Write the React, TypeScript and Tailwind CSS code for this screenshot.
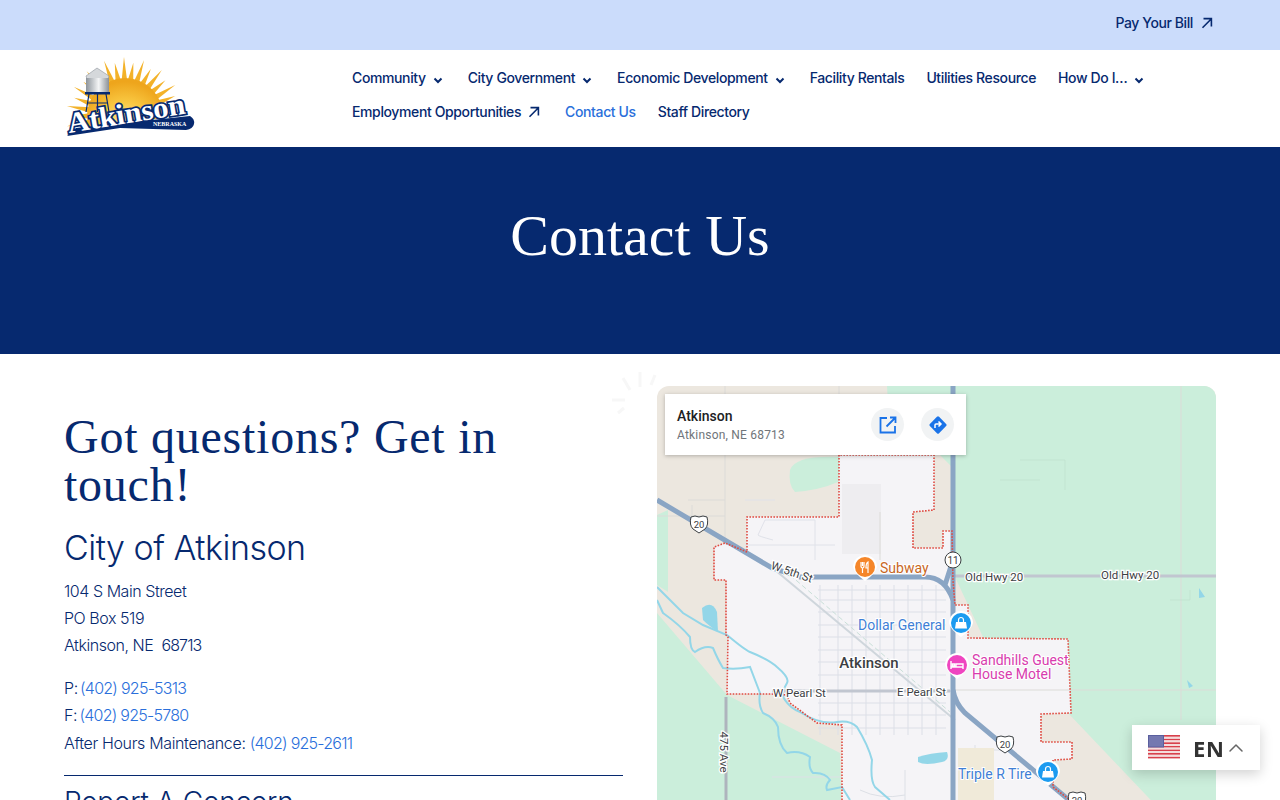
import React from 'react';
import { ChevronUp } from 'lucide-react';

const navItems = [
  { label: 'Community', icon: 'down' },
  { label: 'City Government', icon: 'down' },
  { label: 'Economic Development', icon: 'down' },
  { label: 'Facility Rentals' },
  { label: 'Utilities Resource' },
  { label: 'How Do I…', icon: 'down' },
  { label: 'Employment Opportunities', icon: 'out' },
  { label: 'Contact Us', active: true },
  { label: 'Staff Directory' },
];

const OutArrow = () => (
  <svg width="12" height="12" viewBox="0 0 12 12" fill="none" stroke="currentColor" strokeWidth="1.6" className="shrink-0">
    <path d="M1.5 10.8 L10.2 2 M2.5 1.6 H10.4 V9.5" />
  </svg>
);

const Chevron = () => (
  <svg width="14" height="14" viewBox="0 0 14 14" fill="none" stroke="currentColor" strokeWidth="2" className="shrink-0 mt-[3px] ml-[-1px] mr-[1px]">
    <path d="M3.5 5.5 L7 9 L10.5 5.5" />
  </svg>
);

const Logo = () => {
  const rays = Array.from({ length: 21 }, (_, i) => {
    const a = (-190 + i * 9.9) * (Math.PI / 180);
    const cx = 125;
    const cy = 116;
    const r1 = 36;
    const r2 = i % 2 === 0 ? 59 : 54;
    const b = 0.075;
    return `${cx + r1 * Math.cos(a - b)},${cy + r1 * Math.sin(a - b)} ${cx + r2 * Math.cos(a)},${cy + r2 * Math.sin(a)} ${cx + r1 * Math.cos(a + b)},${cy + r1 * Math.sin(a + b)}`;
  });
  return (
    <svg width="140" height="85" viewBox="60 55 140 85" className="shrink-0">
      <defs>
        <radialGradient id="sun" cx="0.5" cy="0.65" r="0.6">
          <stop offset="0" stopColor="#fdeeb0" />
          <stop offset="0.55" stopColor="#f9c842" />
          <stop offset="1" stopColor="#eea51c" />
        </radialGradient>
        <linearGradient id="tank" x1="0" x2="1" y1="0" y2="0">
          <stop offset="0" stopColor="#8d949b" />
          <stop offset="0.55" stopColor="#f4f5f6" />
          <stop offset="1" stopColor="#8a9097" />
        </linearGradient>
        <clipPath id="sunClip">
          <polygon points="60,55 200,55 200,112 60,134" />
        </clipPath>
      </defs>
      <g clipPath="url(#sunClip)">
        {rays.map((p, i) => (
          <polygon key={i} points={p} fill="#f3b229" />
        ))}
        <circle cx="125" cy="116" r="38" fill="url(#sun)" />
      </g>
      <path d="M67 136 L76 128 L190 116 Q195 119 194 124 Q193 129 186 130 L120 128 Z" fill="#06296f" />
      <path d="M86 76 L97 68 L109 76 L108 79 H87 Z" fill="#d5d8db" stroke="#8d949b" strokeWidth="0.6" />
      <rect x="86" y="78" width="23" height="15" fill="url(#tank)" />
      <rect x="85" y="92" width="25" height="2.5" fill="#06296f" />
      <path d="M89 94 L86 112 M106 94 L109 112 M97.5 94 V112 M88 103 H108" stroke="#06296f" strokeWidth="1.2" fill="none" />
      <text
        x="69"
        y="133"
        transform="rotate(-9.5 69 133)"
        fontFamily="'Liberation Serif', serif"
        fontWeight="700"
        fontSize="29"
        textLength="119"
        lengthAdjust="spacingAndGlyphs"
        fill="#fff"
        stroke="#06296f"
        strokeWidth="3.4"
        paintOrder="stroke"
      >
        Atkinson
      </text>
      <text x="153" y="125.5" fontFamily="'Liberation Serif', serif" fontWeight="700" fontSize="6" fill="#fff">
        NEBRASKA
      </text>
    </svg>
  );
};

const MapPin = ({ x, y, color, kind }: { x: number; y: number; color: string; kind: 'food' | 'shop' | 'bed' }) => (
  <g transform={`translate(${x} ${y})`}>
    <path d="M-12 0 A12 12 0 1 1 12 0 Q11 6 0 14 Q-11 6 -12 0 Z" fill="#fff" />
    <circle r="10" fill={color} />
    {kind === 'food' && (
      <path d="M-4 -5 V-1 Q-4 1 -2.5 1 V6 M-2.5 -5 V-1 M-1 -5 V-1 Q-1 1 -2.5 1 M3 6 V-5 Q1 -4 1 1 H3" stroke="#fff" strokeWidth="1.2" fill="none" />
    )}
    {kind === 'shop' && (
      <g>
        <path d="M-5 -1 H5 L6 5.5 H-6 Z" fill="#fff" />
        <path d="M-2.5 -1 V-3 A2.5 2.5 0 0 1 2.5 -3 V-1" stroke="#fff" strokeWidth="1.2" fill="none" />
      </g>
    )}
    {kind === 'bed' && <path d="M-6 -4 V4 M-6 2 H6 V4 M6 2 V-1 H-1 V2 M-4.5 -1 H-2.5 V1 H-4.5 Z" stroke="#fff" strokeWidth="1.4" fill="none" />}
  </g>
);

const Shield = ({ x, y, label }: { x: number; y: number; label: string }) => (
  <g transform={`translate(${x} ${y})`}>
    <path d="M-8 -7 Q-4 -9 0 -7 Q4 -9 8 -7 Q10 1 6 5 Q3 7 0 9 Q-3 7 -6 5 Q-10 1 -8 -7 Z" fill="#fff" stroke="#3c4043" strokeWidth="1" />
    <text textAnchor="middle" y="3.5" fontSize="9.5" fontFamily="Roboto, sans-serif" fill="#3c4043">
      {label}
    </text>
  </g>
);

const MapDrawing = () => {
  const streetsH = [590, 600, 612, 625, 637, 650, 662, 675, 703, 715, 728];
  const streetsV = [820, 838, 852, 866, 880, 894, 908, 922, 936];
  const labelProps = { paintOrder: 'stroke', stroke: '#fff', strokeWidth: 2.5, fontFamily: 'Roboto, sans-serif' } as const;
  const town =
    '839,455 839,517 747,517 747,552 725,543 714,547 714,580 726,580 726,635 728,637 727,694 772,694 787,695 790,703 817,723 842,725 842,840 1090,840 1070,800 1053,787 1053,760 1072,759 1072,742 1041,742 1041,714 1071,713 1068,639 968,638 968,605 955,605 953,580 952,531 943,531 943,548 913,548 913,512 934,510 934,455';
  return (
    <svg width="559" height="450" viewBox="657 386 559 450" className="block">
      <rect x="657" y="386" width="559" height="450" fill="#ece7df" />
      <polygon points="887,386 1216,386 1216,836 1185,836 1068,713 983,637 955,577 955,470 940,455 890,440" fill="#cbeedb" />
      <polygon points="657,515 668,510 668,592 657,585" fill="#cbeedb" />
      <polygon points="657,613 727,695 840,753 842,836 657,836" fill="#cbeedb" />
      <path d="M790 470 Q795 455 840 457 L838 482 Q820 490 795 492 Q788 485 790 470 Z" fill="#cbeedb" />
      <polygon points={town} fill="#f5f4f7" />
      <rect x="842" y="484" width="39" height="70" fill="#eeedf0" />
      <path d="M725 386 V543 M839 386 V455 M1181 386 V720 M880 512 V560 M955 690 H1216 M657 516 H725 M688 500 H725 M692 505 V520" stroke="#dcdbd8" strokeWidth="1" fill="none" />
      <path d="M745 500 H775 M745 545 H835 M773 540 Q758 536 758 535 L765 520 H815 V560" stroke="#e0e2e9" strokeWidth="1" fill="none" />
      <path d="M1000 480 H1040 M1020 460 H1065 V490 M1170 600 H1190 V590" stroke="#bfe0cf" strokeWidth="0.7" fill="none" />
      {streetsH.map((y) => (
        <path key={y} d={`M818 ${y} H946`} stroke="#dcdfe7" strokeWidth="1" />
      ))}
      {streetsV.map((x) => (
        <path key={x} d={`M${x} 585 V735`} stroke="#dcdfe7" strokeWidth="1" />
      ))}
      <path d="M775 570 L955 720" stroke="#cfd6dc" strokeWidth="2" fill="none" />
      <path d="M790 575 L950 712" stroke="#c9dfd8" strokeWidth="1" strokeDasharray="5 3" fill="none" />
      <path d="M772 777 H840 M860 790 Q880 800 905 795 M905 770 V836 M960 750 H1000 M975 745 V800" stroke="#dde0e6" strokeWidth="1" fill="none" />
      <rect x="958" y="748" width="36" height="60" fill="#f0ead9" />
      <path
        d="M657 587 L683 613 L703 625 L727 635 Q745 650 750 652 Q770 660 777 667 Q790 678 787 683 Q780 695 785 700 Q790 708 800 712 Q820 725 837 722 Q850 720 857 727 Q868 745 872 760 Q870 780 875 787 L890 800"
        stroke="#93d6e8"
        strokeWidth="2"
        fill="none"
      />
      <path
        d="M657 600 L663 613 Q680 625 690 637 Q690 650 695 652 Q705 645 713 648 Q718 660 723 668 Q735 670 750 667 Q755 680 760 693 Q758 705 763 713 Q775 718 778 727 Q778 745 787 753 Q800 750 810 757 Q808 768 813 773 Q825 772 830 780 Q825 785 827 790 L842 787 L850 800"
        stroke="#93d6e8"
        strokeWidth="2"
        fill="none"
      />
      <path d="M702 608 Q712 600 717 612 L718 632 Q708 625 703 620 Z" fill="#93d6e8" />
      <path d="M918 757 Q930 753 947 752 Q950 760 942 762 Q925 766 918 762 Z" fill="#93d6e8" />
      <path d="M1199 588 L1205 597 L1199 598 Z M1187 680 L1193 686 L1189 688 Z" fill="#93d6e8" />
      <path d="M772 691 H950 M955 576 H1216" stroke="#c1c6d0" strokeWidth="3" fill="none" />
      <path d="M726 697 V836" stroke="#aeb4bd" strokeWidth="3" fill="none" />
      <path d="M657 500 L772 568 L800 577 H925 Q945 577 953 600 M945 585 L953 560" stroke="#8aa5c4" strokeWidth="5" fill="none" />
      <path d="M953 386 V836" stroke="#8aa5c4" strokeWidth="5" fill="none" />
      <path d="M953 690 Q955 703 965 713 L1075 805" stroke="#8aa5c4" strokeWidth="5" fill="none" />
      <polygon points={town} fill="none" stroke="#df4a40" strokeWidth="1.6" strokeDasharray="1.6 1.4" />
      <Shield x={699} y={524} label="20" />
      <Shield x={1005} y={744} label="20" />
      <Shield x={1077} y={800} label="20" />
      <circle cx="953" cy="560" r="8" fill="#fff" stroke="#3c4043" />
      <text x="953" y="564" textAnchor="middle" fontSize="10" fontFamily="Roboto, sans-serif" fill="#3c4043">
        11
      </text>
      <g fontSize="11.5" fill="#3c4043">
        <text x="792" y="576" textAnchor="middle" transform="rotate(19 792 572)" {...labelProps}>
          W 5th St
        </text>
        <text x="965" y="581" {...labelProps}>Old Hwy 20</text>
        <text x="1101" y="579" {...labelProps}>Old Hwy 20</text>
        <text x="773" y="697" {...labelProps}>W Pearl St</text>
        <text x="897" y="696" {...labelProps}>E Pearl St</text>
        <text x="724" y="752" textAnchor="middle" transform="rotate(90 724 752)" dy="4" {...labelProps}>475 Ave</text>
      </g>
      <text x="869" y="668" textAnchor="middle" fontSize="15" fontWeight="500" fill="#3c4043" {...labelProps}>Atkinson</text>
      <g fontSize="14" fontFamily="Roboto, sans-serif" stroke="#fff" strokeWidth="2" paintOrder="stroke">
        <text x="880" y="573" fill="#c8661e">Subway</text>
        <text x="858" y="630" fill="#3f7fd6">Dollar General</text>
        <text x="972" y="665" fill="#d83cae">Sandhills Guest</text>
        <text x="972" y="679" fill="#d83cae">House Motel</text>
        <text x="958" y="779" fill="#3f7fd6">Triple R Tire</text>
      </g>
      <MapPin x={865} y={567} color="#f5862a" kind="food" />
      <MapPin x={961} y={623} color="#1c9bf0" kind="shop" />
      <MapPin x={957} y={665} color="#ef45c0" kind="bed" />
      <MapPin x={1048} y={772} color="#1c9bf0" kind="shop" />
    </svg>
  );
};

export default function App() {
  return (
    <div className="h-[800px] overflow-hidden bg-white text-[#06296f] font-['Inter',sans-serif]">
      {/* Top bar */}
      <div className="h-[50px] bg-[#cbdcfb] flex items-center justify-end pr-[67px] pb-1">
        <a className="flex items-center gap-2 text-sm font-medium tracking-[-0.4px]">
          Pay Your Bill
          <OutArrow />
        </a>
      </div>

      {/* Header */}
      <header className="h-[97px] flex pl-[60px] pr-16">
        <div className="w-[292px] pt-[5px]">
          <Logo />
        </div>
        <nav className="flex-1 flex flex-wrap content-start gap-x-[22px] pt-[11px]">
          {navItems.map((item) => (
            <a
              key={item.label}
              className={`h-[34px] flex items-center gap-[6px] text-sm font-medium tracking-[-0.38px] ${item.active ? 'text-[#2a6fdb]' : ''}`}
            >
              {item.label}
              {item.icon === 'down' && <Chevron />}
              {item.icon === 'out' && <span className="ml-[1px] mr-[3px]"><OutArrow /></span>}
            </a>
          ))}
        </nav>
      </header>

      {/* Banner */}
      <section className="h-[207px] bg-[#06296f] flex justify-center pt-[54px]">
        <h1 className="text-[58px] leading-[70px] text-white font-['Liberation_Serif',serif]">Contact Us</h1>
      </section>

      {/* Content */}
      <main className="grid grid-cols-2 gap-x-[34px] px-16 pt-8">
        <div className="pt-[27px]">
          <h2 className="text-[48px] leading-[48px] tracking-[0.75px] font-['Liberation_Serif',serif] mb-[15px]">
            Got questions? Get in
            <br />
            touch!
          </h2>
          <h3 className="text-[34px] leading-[48px] font-light tracking-[-0.5px] mb-[6px]">City of Atkinson</h3>
          <p className="text-base leading-[27px] font-[350] tracking-[-0.45px] mb-4">
            104 S Main Street
            <br />
            PO Box 519
            <br />
            Atkinson, NE&nbsp; <span className="tracking-[-0.9px]">68713</span>
          </p>
          <p className="text-base leading-[27.4px] font-[350] tracking-[-0.35px]">
            <span className="mr-[-2px]">P:</span> <a className="text-[#2a6fdb] tracking-[-0.75px]">(402) 925-5313</a>
            <br />
            <span className="mr-[-2px]">F:</span> <a className="text-[#2a6fdb] tracking-[-0.75px]">(402) 925-5780</a>
            <br />
            After Hours Maintenance: <a className="text-[#2a6fdb] tracking-[-0.75px]">(402) 925-2611</a>
          </p>
          <hr className="border-[#06296f] mt-[18px] mb-2" />
          <h3 className="text-[28px] leading-9 font-light tracking-[-0.2px]">Report A Concern</h3>
        </div>

        <div className="relative">
          <div className="rounded-xl overflow-hidden">
            <MapDrawing />
          </div>
          {/* Place card */}
          <div className="absolute left-2 top-2 w-[301px] h-[61px] bg-white shadow-[0_1px_4px_rgba(0,0,0,0.25)] flex items-center pl-3 pr-3 font-['Roboto',sans-serif]">
            <div className="flex-1">
              <div className="text-sm leading-[20px] font-medium text-[#202124]">Atkinson</div>
              <div className="text-xs leading-[18px] text-[#70757a] tracking-[0.2px]">Atkinson, NE 68713</div>
            </div>
            <div className="flex gap-[17px]">
              <div className="w-[33px] h-[33px] rounded-full bg-[#f1f3f4] flex items-center justify-center">
                <svg width="18" height="18" viewBox="0 0 18 18" fill="none" stroke="#1a73e8" strokeWidth="1.8">
                  <path d="M8 2 H1.5 V16.5 H16 V10" />
                  <path d="M11 1.5 H16.5 V7 M16 2 L7.5 10.5" />
                </svg>
              </div>
              <div className="w-[33px] h-[33px] rounded-full bg-[#f1f3f4] flex items-center justify-center">
                <svg width="20" height="20" viewBox="0 0 20 20">
                  <rect x="3.5" y="3.5" width="13" height="13" rx="1.5" transform="rotate(45 10 10)" fill="#1a73e8" />
                  <path d="M7 13 V10 Q7 9 8 9 H12 M10.5 6.5 L13 9 L10.5 11.5" stroke="#fff" strokeWidth="1.5" fill="none" />
                </svg>
              </div>
            </div>
          </div>
          {/* Loading spinner ghost */}
          <svg width="50" height="50" viewBox="0 0 50 50" className="absolute left-[-46px] top-[-16px]" stroke="#f7f7f7" strokeWidth="3">
            <path d="M29 2 V17 M12 8 L19 20 M44 5 L40 15 M1 30 H14 M7 43 L13 38" />
          </svg>
        </div>
      </main>

      {/* Language switcher */}
      <div className="fixed left-[1132px] top-[725px] w-[128px] h-[45px] bg-white shadow-[0_4px_12px_rgba(0,0,0,0.18)] flex items-center pl-4 font-['Open_Sans',sans-serif]">
        <svg width="32" height="25" viewBox="0 0 32 25">
          {Array.from({ length: 7 }, (_, i) => (
            <rect key={i} x="0" y={i * 3.6} width="32" height="1.8" fill="#d8404c" />
          ))}
          {Array.from({ length: 6 }, (_, i) => (
            <rect key={i} x="0" y={1.8 + i * 3.6} width="32" height="1.8" fill="#f4dcdc" />
          ))}
          <rect width="16" height="12.5" fill="#5a5f9e" />
          <rect x="1" y="1" width="14" height="10.5" fill="#7f83b8" opacity="0.7" />
        </svg>
        <span className="ml-[13px] text-[22px] leading-none font-bold text-[#333] tracking-[0.6px]">EN</span>
        <ChevronUp className="w-6 h-6 text-[#666]" strokeWidth={1.5} />
      </div>
    </div>
  );
}
